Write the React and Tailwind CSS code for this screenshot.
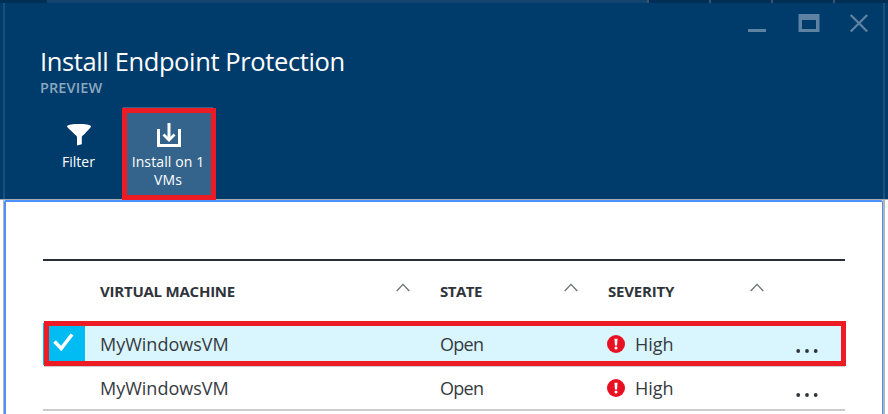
import React from "react";

const SortCaret = () => (
  <svg width="14" height="9" viewBox="0 0 14 9" className="mt-[22px] shrink-0" fill="none" stroke="#6b6e73" strokeWidth="1.3">
    <path d="M0.7 8 L7 1.4 L13.3 8" />
  </svg>
);

const Alert = () => (
  <svg width="18" height="18" viewBox="0 0 18 18" className="mr-[10px] shrink-0">
    <circle cx="9" cy="9" r="9" fill="#e81123" />
    <path d="M7.500 3.800h3l-.4 6.600H7.900z" fill="#fff" />
    <circle cx="9" cy="12.900" r="1.500" fill="#fff" />
  </svg>
);

const Dots = () => (
  <svg width="24" height="6" viewBox="0 0 24 6" className="mt-[14px] ml-[134px]" fill="#2f343b">
    <circle cx="3.2" cy="3" r="1.9" />
    <circle cx="12" cy="3" r="1.9" />
    <circle cx="20.7" cy="3" r="1.9" />
  </svg>
);

function Cells() {
  return (
    <>
      <span className="w-[340px]">MyWindowsVM</span>
      <span className="w-[167px] tracking-[-0.7px]">Open</span>
      <Alert />
      <span className="w-[26px]">High</span>
      <Dots />
    </>
  );
}

export default function App() {
  return (
    <div className="flex h-[414px] w-[888px] flex-col overflow-hidden bg-white font-['Open_Sans','Noto_Sans',sans-serif]">
      <div className="flex h-[3px] shrink-0 bg-[#002e54]">
        <div className="w-[47px]" />
        <div className="w-[600px] bg-[#11446f]" />
        <div className="w-[2px] bg-[#365572]" />
        <div className="ml-[60px] w-[2px] bg-[#365572]" />
        <div className="ml-[60px] w-[2px] bg-[#365572]" />
        <div className="ml-[60px] w-[2px] bg-[#365572]" />
      </div>

      <header className="z-10 flex h-[196px] shrink-0 bg-[#003c6b]">
        <div className="ml-[3px] w-[2px] bg-[#1a4f7a]" />
        <div className="flex w-[878px] flex-col">
          <div className="flex h-[42px] shrink-0 justify-end pt-[11px] pr-[15px]">
            <svg width="120" height="19" viewBox="0 0 120 19" fill="none">
              <path d="M0 16.5h18" stroke="#5e82a2" strokeWidth="3" />
              <path d="M50.500 0h21v18h-21z M54 6v9h14V6z" fill="#5e82a2" fillRule="evenodd" />
              <path d="M102.700 1l16.500 16.500M119.200 1l-16.500 16.500" stroke="#5e82a2" strokeWidth="2.300" />
            </svg>
          </div>
          <h1 className="ml-[35px] h-[34px] shrink-0 text-[25.500px] leading-[32px] tracking-[-0.38px] whitespace-nowrap text-white">Install Endpoint Protection</h1>
          <div className="ml-[35px] h-[18px] shrink-0 text-[14.500px] leading-[18px] font-semibold tracking-[0.1px] text-[#8ba8c0]">PREVIEW</div>
          <div className="mt-[10px] flex h-[93px] shrink-0 text-center text-[14px] leading-[18px] text-white">
            <div className="ml-[30px] flex w-[87px] flex-col items-center pt-[17px]">
              <svg width="24" height="22" viewBox="0 0 24 22" className="ml-px" fill="#fff">
                <path d="M0 2.200C1 .5 6 0 12 0s11 .5 12 2.200c0 1.200-3.200 4-6.200 7.600-1.300 1.600-3 1.800-3 3.500v7L10 21.500v-8.200c0-1.700-1.500-1.900-2.900-3.500C4 6.200 0 3.400 0 2.200z" />
              </svg>
              <span className="mt-[7px]">Filter</span>
            </div>
            <div className="flex w-[94px] flex-col">
              <div className="ml-px h-px w-[90px] shrink-0 bg-[#34648b]" />
              <div className="flex h-[92px] shrink-0 flex-col items-center border-[5px] border-[#ed1c24] bg-[#34648b] pt-[10px]">
                <svg width="24" height="24" viewBox="0 0 24 24" className="shrink-0" fill="none" stroke="#fff">
                  <path d="M1.500 6v16.500h21V6" strokeWidth="3" />
                  <path d="M12 0v17" strokeWidth="3" />
                  <path d="M6.500 11.500L12 17l5.500-5.500" strokeWidth="2.800" />
                </svg>
                <span className="mt-[6px] w-[84px] pr-[2px] tracking-[0.12px] whitespace-nowrap">Install on 1<br />VMs</span>
              </div>
            </div>
          </div>
        </div>
        <div className="w-[2px] bg-[#1a4f7a]" />
      </header>

      <main className="flex h-[215px] shrink-0 border-t border-[#a8abb0]">
        <div className="ml-[3px] w-[882px] border-x border-r-2 border-[#b5b5b5]">
          <div className="h-full rounded-t-[2px] border-t-2 border-r border-l-2 border-[#4d90fe] bg-white pl-[37px]">
            <div className="mt-[57px] flex h-[62px] w-[802px] border-t-2 border-[#2b2e38] pl-[57px] text-[15px] leading-[60px] font-bold text-[#2f343b]">
              <span className="w-[296px] tracking-[-0.23px] whitespace-nowrap">VIRTUAL MACHINE</span>
              <SortCaret />
              <span className="ml-[30px] w-[124px] tracking-[-0.5px]">STATE</span>
              <SortCaret />
              <span className="ml-[30px] w-[142px] tracking-[-0.2px]">SEVERITY</span>
              <SortCaret />
            </div>
            <div className="flex h-[46px] w-[803px] text-[18px] text-[#353a41]">
              <div className="my-[2px] w-px shrink-0 bg-[#00bcf2]" />
              <div className="flex h-[46px] w-[802px] flex-col">
                <div className="flex h-[45px] shrink-0 items-center border-[5px] border-[#ed1c24] bg-[#d9f5fe]">
                  <div className="mr-[15px] flex h-full w-[36px] shrink-0 items-start bg-[#00bcf2] pt-[7px] pl-[4px]">
                    <svg width="21" height="18" viewBox="0 0 21 18" fill="none" stroke="#fff" strokeWidth="3.600">
                      <path d="M1.500 8.500L8.200 15.500L19 1.500" />
                    </svg>
                  </div>
                  <div className="flex items-center pt-px">
                    <Cells />
                  </div>
                </div>
                <div className="h-px w-[801px] bg-[#cccccc]" />
              </div>
            </div>
            <div className="flex h-[44px] w-[802px] items-center border-b-2 border-[#cccccc] pl-[57px] text-[18px] text-[#353a41]">
              <Cells />
            </div>
          </div>
        </div>
      </main>
    </div>
  );
}
